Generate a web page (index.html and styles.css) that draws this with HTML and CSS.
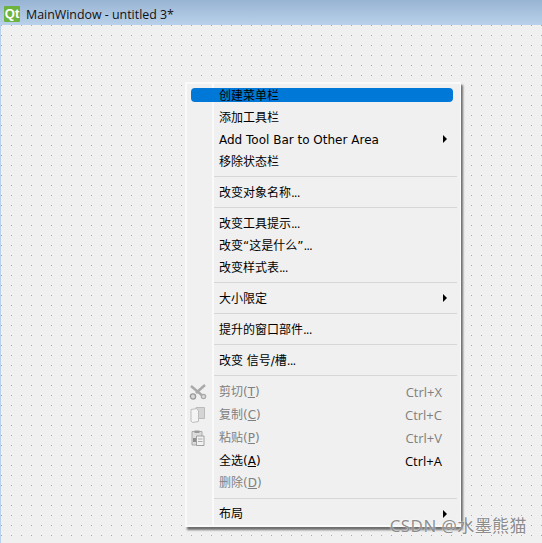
FILE: index.html
```html
<!DOCTYPE html>
<html lang="zh-CN">
<head>
    <meta charset="UTF-8">
    <meta name="viewport" content="width=device-width, initial-scale=1.0">
    <title>MainWindow - untitled 3*</title>
    <link rel="stylesheet" href="styles.css">
</head>
<body>
    <div class="titlebar">
        <span class="qt-logo">Qt</span>
        <span class="title">MainWindow - untitled 3*</span>
    </div>

    <div class="canvas">
        <div class="menu">
            <div class="row active"><span class="gutter"></span><span class="label">创建菜单栏</span></div>
            <div class="row"><span class="gutter"></span><span class="label">添加工具栏</span></div>
            <div class="row"><span class="gutter"></span><span class="label">Add Tool Bar to Other Area</span><span class="arrow"></span></div>
            <div class="row"><span class="gutter"></span><span class="label">移除状态栏</span></div>
            <div class="sep"><span class="gutter"></span><span class="line"></span></div>
            <div class="row"><span class="gutter"></span><span class="label">改变对象名称<span class="dots">...</span></span></div>
            <div class="sep"><span class="gutter"></span><span class="line"></span></div>
            <div class="row"><span class="gutter"></span><span class="label">改变工具提示<span class="dots">...</span></span></div>
            <div class="row"><span class="gutter"></span><span class="label">改变“这是什么”<span class="dots">...</span></span></div>
            <div class="row"><span class="gutter"></span><span class="label">改变样式表<span class="dots">...</span></span></div>
            <div class="sep"><span class="gutter"></span><span class="line"></span></div>
            <div class="row"><span class="gutter"></span><span class="label">大小限定</span><span class="arrow"></span></div>
            <div class="sep"><span class="gutter"></span><span class="line"></span></div>
            <div class="row"><span class="gutter"></span><span class="label">提升的窗口部件<span class="dots">...</span></span></div>
            <div class="sep"><span class="gutter"></span><span class="line"></span></div>
            <div class="row"><span class="gutter"></span><span class="label">改变 信号/槽<span class="dots">...</span></span></div>
            <div class="sep"><span class="gutter"></span><span class="line"></span></div>
            <div class="row tall disabled up">
                <span class="gutter">
                    <svg width="18" height="18" viewBox="0 0 18 18">
                        <path d="M16 2 L7 10 M2 3 L15 14" fill="none" stroke="#a9a9a9" stroke-width="2.4"/>
                        <circle cx="4" cy="13.5" r="2.6" fill="#d8d8d8" stroke="#999" stroke-width="1.3"/>
                        <circle cx="14.5" cy="13.5" r="2.2" fill="#d8d8d8" stroke="#aaa" stroke-width="1.2"/>
                    </svg>
                </span>
                <span class="label">剪切(<u>T</u>)</span><span class="shortcut">Ctrl+X</span>
            </div>
            <div class="row tall disabled up">
                <span class="gutter">
                    <svg width="18" height="18" viewBox="0 0 18 18">
                        <path d="M7 1.5 H15.5 V12.5 H8 Z" fill="#d4d4d4" stroke="#bbb"/>
                        <path d="M2 3.5 L8 2.5 L9.5 5 V15.5 L3.5 16.5 L2 15 Z" fill="#f4f4f4" stroke="#bdbdbd"/>
                    </svg>
                </span>
                <span class="label">复制(<u>C</u>)</span><span class="shortcut">Ctrl+C</span>
            </div>
            <div class="row tall disabled up">
                <span class="gutter">
                    <svg width="18" height="18" viewBox="0 0 18 18">
                        <path d="M3 2.5 H13 V16 H3 Z" fill="#dcdcdc" stroke="#a8a8a8"/>
                        <rect x="5.5" y="1.5" width="5" height="2.5" fill="#999"/>
                        <path d="M7.5 7 H15 V16.5 H7.5 Z" fill="#f2f2f2" stroke="#a0a0a0"/>
                        <path d="M4 9 H7 V13 H4 Z" fill="#8f8f8f"/>
                        <path d="M9 10 H13.5 M9 12.5 H13.5" stroke="#aaa"/>
                    </svg>
                </span>
                <span class="label">粘贴(<u>P</u>)</span><span class="shortcut">Ctrl+V</span>
            </div>
            <div class="row tall up"><span class="gutter"></span><span class="label">全选(<u>A</u>)</span><span class="shortcut">Ctrl+A</span></div>
            <div class="row disabled up"><span class="gutter"></span><span class="label">删除(<u>D</u>)</span></div>
            <div class="sep"><span class="gutter"></span><span class="line"></span></div>
            <div class="row up"><span class="gutter"></span><span class="label">布局</span><span class="arrow"></span></div>
        </div>
    </div>

    <div class="watermark">CSDN @水墨熊猫</div>
</body>
</html>
```

FILE: styles.css
```css
html, body {
    margin: 0;
    height: 100%;
}
body {
    width: 542px;
    height: 543px;
    overflow: hidden;
    position: relative;
    display: flex;
    flex-direction: column;
    background: #f0f0f0;
    font-family: "DejaVu Sans", "Noto Sans CJK SC", sans-serif;
    font-size: 12px;
    color: #000;
}
.titlebar {
    height: 25px;
    flex: none;
    display: flex;
    align-items: center;
    gap: 6px;
    padding: 3px 0 0 4px;
    box-sizing: border-box;
    background: linear-gradient(#98b4d3, #b9d1ea);
}
.qt-logo {
    width: 16px;
    height: 16px;
    background: #6cb33f;
    border-radius: 1px;
    color: #fff;
    font: bold 13px/16px "Liberation Sans", sans-serif;
    text-align: center;
}
.title {
    font-family: "Open Sans", sans-serif;
    font-size: 12.4px;
    color: #111;
}
.canvas {
    flex: 1;
    padding: 57px 0 0 184px;
    border-left: 1px solid #b9d1ea;
    background-color: #f0f0f0;
    background-image: radial-gradient(circle at 0.5px 0.5px, #a8a8a8 0.7px, transparent 0.7px);
    background-size: 10px 10px;
}
.menu {
    width: 276px;
    box-sizing: border-box;
    border: 2px solid #fafafa;
    border-right-width: 1px;
    background: #f0f0f0;
    box-shadow: 2px 3px 2px #6e6e6e;
    display: flex;
    flex-direction: column;
}
.row {
    height: 22px;
    flex: none;
    display: flex;
    align-items: center;
    position: relative;
    padding-right: 12px;
}
.row.tall {
    height: 23px;
}
.row.active::before {
    content: "";
    position: absolute;
    left: 4px;
    right: 7px;
    top: 4px;
    height: 14px;
    border-radius: 4px;
    background: #0078d7;
}
.gutter {
    width: 23px;
    align-self: stretch;
    flex: none;
    padding-left: 2px;
    margin-right: 5px;
    display: flex;
    align-items: center;
    justify-content: flex-start;
    border-right: 2px solid #fafafa;
}
.label {
    flex: 1;
    position: relative;
    top: 1px;
    line-height: 22px;
}
.up .label,
.up .shortcut {
    top: 0;
}
.dots {
    letter-spacing: -1px;
}
.shortcut {
    position: relative;
    top: 1px;
    margin-right: 6px;
    font-family: "Open Sans", sans-serif;
    font-size: 13px;
}
.disabled {
    color: #808080;
}
.arrow {
    width: 0;
    height: 0;
    margin-right: 1px;
    border-left: 4px solid #000;
    border-top: 4px solid transparent;
    border-bottom: 4px solid transparent;
}
.sep {
    height: 9px;
    flex: none;
    display: flex;
    align-items: center;
}
.sep .gutter {
    margin-right: 0;
}
.line {
    flex: 1;
    height: 1px;
    background: #d7d7d7;
    margin-right: 3px;
}
.watermark {
    position: absolute;
    right: 15px;
    bottom: 6px;
    font-family: "Open Sans", "Noto Sans CJK SC", sans-serif;
    font-size: 17px;
    letter-spacing: 0.45px;
    color: #8c8c8c;
    text-shadow: 0 0 2px #fff;
}
```
